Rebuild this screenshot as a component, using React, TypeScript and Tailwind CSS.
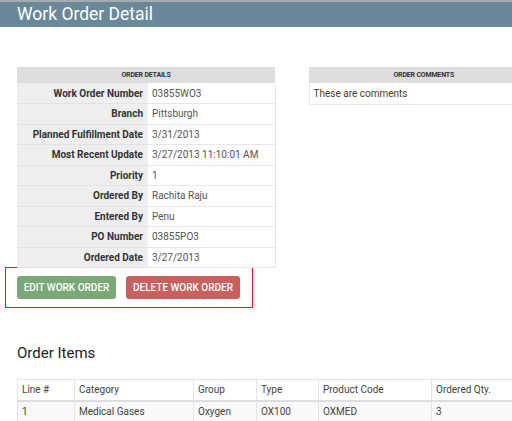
import React from 'react';

const details: [string, string][] = [
  ['Work Order Number', '03855WO3'],
  ['Branch', 'Pittsburgh'],
  ['Planned Fulfillment Date', '3/31/2013'],
  ['Most Recent Update', '3/27/2013 11:10:01 AM'],
  ['Priority', '1'],
  ['Ordered By', 'Rachita Raju'],
  ['Entered By', 'Penu'],
  ['PO Number', '03855PO3'],
  ['Ordered Date', '3/27/2013'],
];

const itemCols = [
  { label: 'Line #', w: 'w-[57px]' },
  { label: 'Category', w: 'w-[119px]' },
  { label: 'Group', w: 'w-[63px]' },
  { label: 'Type', w: 'w-[62px]' },
  { label: 'Product Code', w: 'w-[113px]' },
  { label: 'Ordered Qty.', w: 'w-[100px]' },
];

const itemRow = ['1', 'Medical Gases', 'Oxygen', 'OX100', 'OXMED', '3'];

export default function App() {
  return (
    <div className="w-[512px] h-[421px] overflow-hidden bg-white font-['Roboto',sans-serif]">
      {/* Title bar */}
      <div className="border-t-2 border-[#a4acb1] bg-[#6b8898] h-[27px] flex items-center px-[17px]">
        <h1 className="text-white text-[17.5px] leading-none font-['Roboto',sans-serif]">
          Work Order Detail
        </h1>
      </div>

      <div className="flex items-start mt-[40px] pl-[17px] gap-[33px]">
        {/* Order details */}
        <table className="w-[258px] shrink-0 table-fixed border-collapse text-[10px]">
          <colgroup>
            <col className="w-[131px]" />
            <col className="w-[127px]" />
          </colgroup>
          <thead>
            <tr>
              <th colSpan={2} className="bg-[#dddddd] h-[16px] text-[7px] font-bold uppercase text-[#333] tracking-tight">
                Order Details
              </th>
            </tr>
          </thead>
          <tbody>
            {details.map(([k, v]) => (
              <tr key={k} className="h-[20.5px]">
                <td className="bg-[#eeeeee] border-b border-[#e2e2e2] text-right pr-[5px] font-bold text-[#333] whitespace-nowrap">
                  {k}
                </td>
                <td className="border-b border-r border-[#e6e6e6] pl-[4px] text-[#555] whitespace-nowrap">{v}</td>
              </tr>
            ))}
          </tbody>
        </table>

        {/* Order comments */}
        <table className="w-[230px] shrink-0 table-fixed border-collapse text-[10px]">
          <thead>
            <tr>
              <th className="bg-[#dddddd] h-[16px] text-[7px] font-bold uppercase text-[#333] tracking-tight">
                Order Comments
              </th>
            </tr>
          </thead>
          <tbody>
            <tr className="h-[21px]">
              <td className="border-b border-l border-[#e6e6e6] pl-[4px] text-[#4a3a30] whitespace-nowrap">These are comments</td>
            </tr>
          </tbody>
        </table>
      </div>

      {/* Action buttons */}
      <div className="ml-[5px] mt-[-1px] w-[248px] h-[41px] border-[1.5px] border-[#e0161e] flex items-center gap-[10px] pl-[11px]">
        <button className="h-[23px] w-[99px] rounded-[3px] bg-[#7aa877] text-white text-[10px] font-medium uppercase">
          Edit Work Order
        </button>
        <button className="h-[23px] w-[114px] rounded-[3px] bg-[#c9605e] text-white text-[10px] font-medium uppercase">
          Delete Work Order
        </button>
      </div>

      {/* Order items */}
      <h2 className="ml-[17px] mt-[38px] text-[15px] leading-none text-[#222] font-['Roboto',sans-serif]">Order Items</h2>

      <table className="ml-[17px] mt-[18px] w-[514px] table-fixed border-collapse text-[10px] text-[#444]">
        <colgroup>
          {itemCols.map((c) => (
            <col key={c.label} className={c.w} />
          ))}
        </colgroup>
        <thead>
          <tr className="h-[21px]">
            {itemCols.map((c) => (
              <th
                key={c.label}
                className="text-left font-normal pl-[4px] border border-[#e4e4e4] border-b-2 border-b-[#dedede] whitespace-nowrap"
              >
                {c.label}
              </th>
            ))}
          </tr>
        </thead>
        <tbody>
          <tr className="h-[21px] bg-[#f9f9f9]">
            {itemRow.map((v, i) => (
              <td key={i} className="pl-[4px] border border-[#e4e4e4] whitespace-nowrap">
                {v}
              </td>
            ))}
          </tr>
        </tbody>
      </table>
    </div>
  );
}
